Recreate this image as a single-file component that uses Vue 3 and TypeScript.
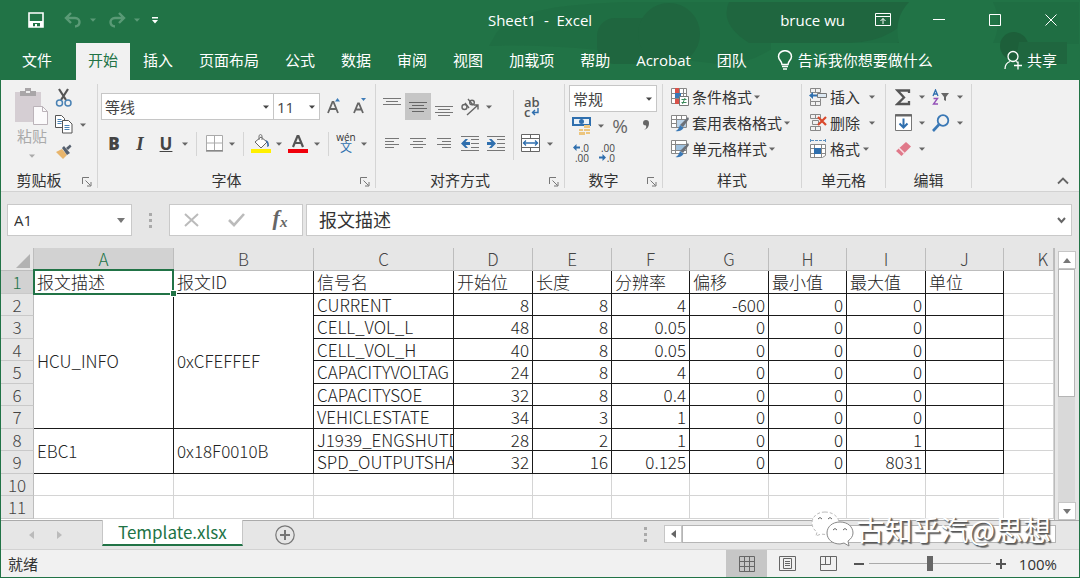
<script setup lang="ts">
import { h, ref } from 'vue'

const Caret = () =>
  h('svg', { class: 'caret', width: 6, height: 4, viewBox: '0 0 6 4', 'aria-hidden': 'true' }, [
    h('path', { d: 'M0 0.5h6L3 3.8z', fill: 'currentColor' }),
  ])

const Launcher = () =>
  h('svg', { class: 'launcher', width: 10, height: 10, viewBox: '0 0 10 10', 'aria-hidden': 'true' }, [
    h('path', { d: 'M.5 7V.5H7M3.5 3.5l5 5M9 5v4H5', fill: 'none', stroke: '#777' }),
  ])

const tabs: string[] = ['插入', '页面布局', '公式', '数据', '审阅', '视图', '加载项', '帮助', 'Acrobat', '团队']
const letters: string[] = ['A', 'B', 'C', 'D', 'E', 'F', 'G', 'H', 'I', 'J', 'K']
const headings: string[] = ['报文描述', '报文ID', '信号名', '开始位', '长度', '分辨率', '偏移', '最小值', '最大值', '单位']

interface Signal {
  message?: string
  id?: string
  span?: number
  name: string
  values: number[]
}

const signals: Signal[] = [
  { message: 'HCU_INFO', id: '0xCFEFFEF', span: 6, name: 'CURRENT', values: [8, 8, 4, -600, 0, 0] },
  { name: 'CELL_VOL_L', values: [48, 8, 0.05, 0, 0, 0] },
  { name: 'CELL_VOL_H', values: [40, 8, 0.05, 0, 0, 0] },
  { name: 'CAPACITYVOLTAG', values: [24, 8, 4, 0, 0, 0] },
  { name: 'CAPACITYSOE', values: [32, 8, 0.4, 0, 0, 0] },
  { name: 'VEHICLESTATE', values: [34, 3, 1, 0, 0, 0] },
  { message: 'EBC1', id: '0x18F0010B', span: 2, name: 'J1939_ENGSHUTD', values: [28, 2, 1, 0, 0, 1] },
  { name: 'SPD_OUTPUTSHA', values: [32, 16, 0.125, 0, 0, 8031] },
]

const cellRef = ref('A1')
const formula = ref('报文描述')
const zoom = ref(100)
</script>

<template>
  <div class="window">
    <header class="top">
      <svg class="pattern" width="600" height="66" viewBox="0 0 600 66" aria-hidden="true">
        <g fill="#1f663f">
          <path d="M18 32C40 8 90 4 150 2H600V44H300Q270 66 240 64L120 50Q60 44 10 46Z" opacity=".4" />
          <rect x="118" y="18" width="70" height="46" rx="18" />
          <circle cx="190" cy="34" r="31" />
          <path d="M250 2H440Q420 42 370 43H270Q240 24 250 2Z" />
          <rect x="414" y="42" width="50" height="22" rx="8" />
        </g>
        <path d="M430 2h84q10 20 0 41h-94q-6-24 10-41z" fill="#217346" />
        <rect x="292" y="43" width="240" height="23" fill="#217346" />
        <circle cx="535" cy="46" r="14" fill="#1d5f3a" />
        <path d="M540 42h48v22h-52z" fill="#1f663f" />
      </svg>
      <div class="titlebar">
        <div class="quick">
          <button class="q save" aria-label="保存">
            <svg width="16" height="16" viewBox="0 0 16 16"><path d="M1 1h14v14H1z" fill="none" stroke="#fff" stroke-width="1.6" /><path d="M1 9h14v6h-3v-4H5v4H1z" fill="#fff" /><path d="M7 12h2v3H7z" fill="#fff" /></svg>
          </button>
          <button class="q dim" aria-label="撤消">
            <svg width="18" height="16" viewBox="0 0 18 16" fill="none" stroke="currentColor" stroke-width="2.4"><path d="M7 1L2 6l5 5M2 6h9c6 0 6 8 0 8.500" /></svg>
            <Caret />
          </button>
          <button class="q dim" aria-label="恢复">
            <svg width="18" height="16" viewBox="0 0 18 16" fill="none" stroke="currentColor" stroke-width="2.4"><path d="M11 1l5 5-5 5M16 6H7c-6 0-6 8 0 8.500" /></svg>
            <Caret />
          </button>
          <button class="q" aria-label="自定义快速访问工具栏">
            <svg width="6" height="8" viewBox="0 0 6 8" fill="#fff"><path d="M0 1h6v1.400H0zM0 4h6L3 7.500z" /></svg>
          </button>
        </div>
        <div class="title">Sheet1&nbsp; -&nbsp; Excel</div>
        <div class="caption">
          <span class="user">bruce wu</span>
          <button aria-label="功能区显示选项"><svg width="16" height="14" viewBox="0 0 16 14" fill="none" stroke="#fff"><path d="M.5.5h15v12H.5zM.5 3.500h15M8 11V5.500M5.500 8L8 5.500 10.500 8" /></svg></button>
          <button aria-label="最小化"><svg width="12" height="12" viewBox="0 0 12 12" stroke="#fff"><path d="M0 5.500h12" /></svg></button>
          <button aria-label="最大化"><svg width="12" height="12" viewBox="0 0 12 12" fill="none" stroke="#fff"><path d="M.5.5h11v11H.5z" /></svg></button>
          <button aria-label="关闭"><svg width="12" height="12" viewBox="0 0 12 12" stroke="#fff"><path d="M.5.5l11 11M11.500.5l-11 11" /></svg></button>
        </div>
      </div>
      <nav class="tabs">
        <button class="file">文件</button>
        <button class="active">开始</button>
        <button v-for="t in tabs" :key="t">{{ t }}</button>
        <button class="tell">
          <svg width="16" height="20" viewBox="0 0 16 20" fill="none" stroke="#fff" stroke-width="1.500"><path d="M5 14.500C5 11 1.500 10 1.500 6.500a6.500 5.800 0 0 1 13 0C14.500 10 11 11 11 14.500zM5 16.500h6M6 19h4" /></svg>
          <span>告诉我你想要做什么</span>
        </button>
        <button class="share">
          <svg width="20" height="20" viewBox="0 0 20 20" fill="none" stroke="#fff" stroke-width="1.300"><circle cx="9" cy="6.500" r="5" /><path d="M1 19c0-4 2-6.500 5-7.500M12 11.500l2 1M10 15.500h8M14 11.500v8" /></svg>
          <span>共享</span>
        </button>
      </nav>
    </header>

    <section class="ribbon">
      <div class="group clipboard">
        <div class="body">
          <button class="paste">
            <svg width="34" height="38" viewBox="0 0 34 38"><path d="M0 4h26v30H0z" fill="#d5ced3" /><path d="M5 3h5V0h6v3h5v5H5z" fill="#a9a6a8" /><path d="M11 3h4v2h-4z" fill="#eee" /><path d="M18.500 18.500h9l5 5v13h-14z" fill="#fbfafb" stroke="#bbb3b9" /><path d="M27.500 18.500v5h5" fill="none" stroke="#bbb3b9" /></svg>
            <span>粘贴</span>
            <Caret />
          </button>
          <div class="stack clips">
            <button class="tool" aria-label="剪切">
              <svg width="18" height="20" viewBox="0 0 18 20" fill="none"><path d="M4 1l7 11M13 1L6 12" stroke="#555" stroke-width="2.200" /><circle cx="4.500" cy="15" r="3" stroke="#4a82b4" stroke-width="1.500" /><circle cx="13" cy="15" r="3" stroke="#4a82b4" stroke-width="1.500" /></svg>
            </button>
            <div class="line">
              <button class="tool" aria-label="复制">
                <svg width="18" height="19" viewBox="0 0 18 19" fill="#fff" stroke="#555"><path d="M.5.5h6l3 3v9h-9z" /><path d="M2.500 4.500h4M2.500 6.500h5M2.500 8.500h4" stroke="#4a82b4" /><path d="M7.500 5.500h6l3.500 3.500v9H7.500z" /><path d="M9.500 10.500h5M9.500 12.500h5M9.500 14.500h5" stroke="#4a82b4" /></svg>
              </button>
              <button class="drop" aria-label="复制选项"><Caret /></button>
            </div>
            <button class="tool" aria-label="格式刷">
              <svg width="18" height="16" viewBox="0 0 18 16"><path d="M1 8l6-3 5 6-4 4z" fill="#e8b56c" /><path d="M7 4l2-2 6 7-3 2z" fill="#56606e" /><path d="M11 4l4-3.500 1.500 2L13 6z" fill="#56606e" /></svg>
            </button>
          </div>
        </div>
        <footer><span>剪贴板</span><Launcher /></footer>
      </div>

      <div class="group font">
        <div class="body rows">
          <div class="line">
            <label class="combo wide"><select aria-label="字体"><option>等线</option></select><Caret /></label>
            <label class="combo size"><select aria-label="字号"><option>11</option></select><Caret /></label>
            <button class="tool grow" aria-label="增大字号"><svg width="14" height="18" viewBox="0 0 14 18"><path d="M1 15L5.500 4h1L11 15M3 11h6" fill="none" stroke="#666" stroke-width="1.800" /><path d="M8 3.500L10.500 0 13 3.500z" fill="#3e7cb8" /></svg></button>
            <button class="tool" aria-label="减小字号"><svg width="14" height="18" viewBox="0 0 14 18"><path d="M1 15L5 5.500h1L10 15M3 11.500h5" fill="none" stroke="#666" stroke-width="1.800" /><path d="M8 0h5l-2.500 3z" fill="#3e7cb8" /></svg></button>
          </div>
          <div class="line">
            <button class="tool glyph"><b>B</b></button>
            <button class="tool glyph serif"><i>I</i></button>
            <button class="tool glyph"><u>U</u></button>
            <button class="drop" aria-label="下划线选项"><Caret /></button>
            <span class="bar"></span>
            <button class="tool narrow" aria-label="边框"><svg width="17" height="17" viewBox="0 0 17 17" fill="#fff" stroke="#aaa"><path d="M.5.5h16v15H.5zM8.500.5v15M.5 8h16" /><path d="M0 16h17" stroke="#666" /></svg></button>
            <button class="drop" aria-label="边框选项"><Caret /></button>
            <span class="bar"></span>
            <button class="tool narrow" aria-label="填充颜色"><svg width="20" height="20" viewBox="0 0 20 20"><path d="M4 8l6-5 6 5-6 6z" fill="#fff" stroke="#666" /><path d="M8 6V1.500q1.500-2 3 0V6" fill="none" stroke="#777" /><path d="M14 6q4 0 4 6l-2 1q1-4-2-7z" fill="#3e6ea8" /><path d="M0 15h20v4H0z" fill="#fff000" /></svg></button>
            <button class="drop" aria-label="填充选项"><Caret /></button>
            <button class="tool" aria-label="字体颜色"><svg width="20" height="20" viewBox="0 0 20 20"><path d="M5 13L9.500 2h1L15 13M7 9h6" fill="none" stroke="#555" stroke-width="2.200" /><path d="M0 15h20v4H0z" fill="#f0000b" /></svg></button>
            <button class="drop" aria-label="颜色选项"><Caret /></button>
            <span class="bar"></span>
            <button class="tool narrow phonetic" aria-label="拼音指南"><small>wén</small><span>文</span></button>
            <button class="drop" aria-label="拼音选项"><Caret /></button>
          </div>
        </div>
        <footer><span>字体</span><Launcher /></footer>
      </div>

      <div class="group align">
        <div class="body">
          <div class="rows">
            <div class="line">
              <button class="tool" aria-label="顶端对齐"><svg width="18" height="20" viewBox="0 0 18 20" stroke="#777"><path d="M0 1.500h18M3 4.500h12M0 7.500h18" /></svg></button>
              <button class="tool on" aria-label="垂直居中"><svg width="18" height="20" viewBox="0 0 18 20" stroke="#666"><path d="M0 5.500h18M3 8.500h12M0 11.500h18M3 14.500h12" /></svg></button>
              <button class="tool" aria-label="底端对齐"><svg width="18" height="20" viewBox="0 0 18 20" stroke="#777"><path d="M0 9.500h18M3 12.500h12M0 15.500h18M3 18.500h12" /></svg></button>
              <button class="tool" aria-label="方向"><svg width="20" height="20" viewBox="0 0 20 20" fill="none" stroke="#666" stroke-width="1.400"><circle cx="4.500" cy="10" r="2.500" /><path d="M5 6l4 5M8 2l5 6" /><circle cx="12" cy="5.500" r="2.300" /><path d="M7 18L18 8M18 12.500V8h-4.500" /></svg></button>
              <button class="drop" aria-label="方向选项"><Caret /></button>
            </div>
            <div class="line">
              <button class="tool" aria-label="左对齐"><svg width="14" height="14" viewBox="0 0 14 14" stroke="#777"><path d="M0 1.500h14M0 4.500h9M0 7.500h14M0 10.500h9" /></svg></button>
              <button class="tool" aria-label="居中"><svg width="16" height="14" viewBox="0 0 16 14" stroke="#777"><path d="M0 1.500h16M3 4.500h10M0 7.500h16M3 10.500h10" /></svg></button>
              <button class="tool" aria-label="右对齐"><svg width="14" height="14" viewBox="0 0 14 14" stroke="#777"><path d="M0 1.500h14M5 4.500h9M0 7.500h14M5 10.500h9" /></svg></button>
              <button class="tool" aria-label="减少缩进"><svg width="18" height="18" viewBox="0 0 18 18"><path d="M0 1.500h18M10 4.500h8M10 8.500h8M10 12.500h8M0 15.500h18" stroke="#777" /><path d="M0 8.500L4.500 4H7L4.500 7H9v3H4.500L7 13H4.500z" fill="#2f6fae" /></svg></button>
              <button class="tool" aria-label="增加缩进"><svg width="18" height="18" viewBox="0 0 18 18"><path d="M0 1.500h18M10 4.500h8M10 8.500h8M10 12.500h8M0 15.500h18" stroke="#777" /><path d="M9 8.500L4.500 4H2l2.500 3H0v3h4.500L2 13h2.500z" fill="#2f6fae" /></svg></button>
            </div>
          </div>
          <span class="bar tall"></span>
          <div class="rows">
            <div class="line"><button class="tool wrap" aria-label="自动换行"><span>ab</span><span class="turn">c<svg width="8" height="8" viewBox="0 0 8 8" fill="none" stroke="#2f6fae" stroke-width="1.400"><path d="M7 0v4.500H1.500M4 2L1.500 4.500 4 7" /></svg></span></button></div>
            <div class="line">
              <button class="tool" aria-label="合并后居中"><svg width="20" height="19" viewBox="0 0 20 19" fill="#fff" stroke="#666"><path d="M.5.5h18v17H.5zM.5 4.500h18M.5 13.500h18M9.500.5v4M9.500 13.500v4" /><path d="M2 9h15M5 6.500L2.500 9 5 11.500M14 6.500L16.500 9 14 11.500" stroke="#2f6fae" fill="none" stroke-width="1.300" /></svg></button>
              <button class="drop" aria-label="合并选项"><Caret /></button>
            </div>
          </div>
        </div>
        <footer><span>对齐方式</span><Launcher /></footer>
      </div>

      <div class="group number">
        <div class="body stack">
          <label class="combo format"><select aria-label="数字格式"><option>常规</option></select><Caret /></label>
          <div class="line">
            <button class="tool" aria-label="会计数字格式"><svg width="20" height="20" viewBox="0 0 20 20"><path d="M0 1h19v9H0z" fill="#2f6fae" /><path d="M2 3h15v5H2z" fill="#e9f1f8" /><circle cx="9.500" cy="5.500" r="2.500" fill="#2f6fae" /><path d="M12 9h6v3h-6zM12 13h6v2h-6zM7 13h4v2H7zM7 16h6v3H7zM14 16h4v2h-4z" fill="#ecc57e" /></svg></button>
            <button class="drop" aria-label="会计选项"><Caret /></button>
            <button class="tool percent">%</button>
            <button class="tool comma" aria-label="千位分隔样式"><svg width="8" height="12" viewBox="0 0 8 12"><path d="M1 3a3 3 0 0 1 6 0c0 4-2 6-5 7q3-2 2-4.500Q1 5.500 1 3z" fill="#666" /></svg></button>
          </div>
          <div class="line">
            <button class="tool decimal" aria-label="增加小数位数"><span class="turn"><svg width="7" height="7" viewBox="0 0 7 7"><path d="M0 3.500L3.500 0v2.500H7v2H3.500V7z" fill="#2f6fae" /></svg>.0</span><span>.00</span></button>
            <button class="tool decimal" aria-label="减少小数位数"><span>.00</span><span class="turn"><svg width="7" height="7" viewBox="0 0 7 7"><path d="M7 3.500L3.500 0v2.500H0v2h3.500V7z" fill="#2f6fae" /></svg>.0</span></button>
          </div>
        </div>
        <footer><span>数字</span><Launcher /></footer>
      </div>

      <div class="group styles">
        <div class="body stack">
          <button class="command"><svg width="20" height="20" viewBox="0 0 20 20"><path d="M1.500 1.500h15v15h-15zM5.500 1.500v15M9.500 1.500v15M13.500 1.500v15M1.500 6.500h15M1.500 11.500h15" fill="#fff" stroke="#888" /><path d="M5 1h4v5H5zM5 12h4v5H5z" fill="#d8524a" /><path d="M5 6h6v5H5z" fill="#3a78b5" /><path d="M9.500 9.500h9v9h-9z" fill="#fff" stroke="#777" /><path d="M11.500 12.500h5M11.500 15.500h5M15 11l-2.500 6" stroke="#3b8a5a" /></svg><span>条件格式</span><Caret /></button>
          <button class="command"><svg width="20" height="20" viewBox="0 0 20 20"><path d="M1.500 2.500h15v12h-15zM6.500 2.500v12M11.500 2.500v12M1.500 6.500h15M1.500 10.500h15" fill="#fff" stroke="#888" /><path d="M7 7h9v7H7z" fill="#b9d2e8" /><path d="M18 4l1 2-6 8-3-2z" fill="#6b7078" /><path d="M10 12l3.500 3q-3 4-8 3 3-1 4.500-6z" fill="#3a78b5" /></svg><span>套用表格格式</span><Caret /></button>
          <button class="command"><svg width="20" height="20" viewBox="0 0 20 20"><path d="M1.500 1.500h15v13h-15zM5.500 1.500v13M1.500 5.500h15M1.500 11.500h15" fill="#fff" stroke="#888" /><path d="M6 6h9v5H6z" fill="#9fc1de" /><path d="M18 4l1 2-6 8-3-2z" fill="#6b7078" /><path d="M10 12l3.500 3q-3 4-8 3 3-1 4.500-6z" fill="#3a78b5" /></svg><span>单元格样式</span><Caret /></button>
        </div>
        <footer><span>样式</span></footer>
      </div>

      <div class="group cells">
        <div class="body stack">
          <button class="command spread"><svg width="18" height="20" viewBox="0 0 18 20"><path d="M1.500 1.500h10v4h-10zM6.500 1.500v4M1.500 14.500h10v4h-10zM6.500 14.500v4M1.500 11.500v3h10v-3" fill="none" stroke="#888" /><path d="M8.500 6.500h9v4h-9z" fill="#dce8f2" stroke="#777" /><path d="M0 8.500L4 5v2.500h4v2H4V12z" fill="#2f6fae" /></svg><span>插入</span><Caret /></button>
          <button class="command spread"><svg width="18" height="20" viewBox="0 0 18 20"><path d="M1.500 1.500h10v4h-10zM6.500 1.500v4M1.500 13.500h10v4h-10zM6.500 13.500v4M3.500 7.500h6v4h-6z" fill="none" stroke="#888" /><path d="M9 4l8 8M17 4l-8 8" stroke="#d9482b" stroke-width="2.200" /></svg><span>删除</span><Caret /></button>
          <button class="command"><svg width="18" height="20" viewBox="0 0 18 20"><path d="M1.500 5.500h15v11l-3 2h-12zM5.500 5.500v13M12.500 5.500v13M1.500 9.500h15M1.500 14.500h15" fill="#fff" stroke="#888" /><path d="M5 9h7v6H5z" fill="#2f6fae" /><path d="M2 1.500h14M1.500 0v3M16.500 0v3" stroke="#5b8fbe" stroke-dasharray="3 1" /></svg><span>格式</span><Caret /></button>
        </div>
        <footer><span>单元格</span></footer>
      </div>

      <div class="group editing">
        <div class="body stack">
          <div class="line">
            <button class="tool" aria-label="自动求和"><svg width="16" height="17" viewBox="0 0 16 17"><path d="M14 4V1.500H2.500L9 8.500l-6.500 6.500H14V12" fill="none" stroke="#555" stroke-width="2.300" /></svg></button>
            <button class="drop" aria-label="求和选项"><Caret /></button>
            <button class="tool" aria-label="排序和筛选"><svg width="18" height="16" viewBox="0 0 18 16" fill="none"><path d="M1 7l2.500-6L6 7M2 5h3" stroke="#2f6fae" stroke-width="1.300" /><path d="M1.500 9.500h4L1.500 15h4.500" stroke="#9452b8" stroke-width="1.400" /><path d="M9 4h8l-3 4v4l-2-1V8z" fill="#666" /></svg></button>
            <button class="drop" aria-label="排序选项"><Caret /></button>
          </div>
          <div class="line">
            <button class="tool" aria-label="填充"><svg width="17" height="18" viewBox="0 0 17 18"><path d="M.5.5h16v16H.5z" fill="#fff" stroke="#777" /><path d="M0 1.500h17" stroke="#666" stroke-width="2" /><path d="M8.500 4.500v9M4.500 9.500l4 4 4-4" fill="none" stroke="#2f6fae" stroke-width="2" /></svg></button>
            <button class="drop" aria-label="填充方向"><Caret /></button>
            <button class="tool" aria-label="查找和选择"><svg width="18" height="18" viewBox="0 0 18 18" fill="none" stroke="#3a78b5"><circle cx="11" cy="6.500" r="5.300" stroke-width="1.800" /><path d="M7 10.500L1 17" stroke-width="2.600" /></svg></button>
            <button class="drop" aria-label="查找选项"><Caret /></button>
          </div>
          <div class="line">
            <button class="tool" aria-label="清除"><svg width="17" height="16" viewBox="0 0 17 16"><path d="M1 10L11 1l5 4.500L6.500 15z" fill="#e0798a" /><path d="M4 7l5.500 5.500" stroke="#f7dfe3" stroke-width="1.500" /></svg></button>
            <button class="drop" aria-label="清除选项"><Caret /></button>
          </div>
        </div>
        <footer><span>编辑</span></footer>
      </div>
      <button class="collapse" aria-label="折叠功能区"><svg width="12" height="8" viewBox="0 0 12 8"><path d="M1 6.500l5-5 5 5" fill="none" stroke="#666" stroke-width="1.800" /></svg></button>
    </section>

    <section class="formula">
      <label class="namebox"><input v-model="cellRef" aria-label="名称框" /><svg width="8" height="5" viewBox="0 0 8 5"><path d="M0 0h8L4 5z" fill="#777" /></svg></label>
      <span class="grip"></span>
      <div class="fx">
        <button aria-label="取消"><svg width="16" height="14" viewBox="0 0 16 14"><path d="M1 1l13 12M14 1L1 13" stroke="#bbb" stroke-width="2" /></svg></button>
        <button aria-label="输入"><svg width="17" height="14" viewBox="0 0 17 14"><path d="M1 7l5 5L16 1" fill="none" stroke="#bbb" stroke-width="2.600" /></svg></button>
        <button class="fn"><i>f<sub>x</sub></i></button>
      </div>
      <label class="entry"><input v-model="formula" aria-label="编辑栏" /><svg width="9" height="7" viewBox="0 0 9 7"><path d="M1 1l3.500 4L8 1" fill="none" stroke="#666" stroke-width="2" /></svg></label>
    </section>

    <main class="sheet">
      <div class="canvas">
        <table>
          <colgroup>
            <col class="c-row" /><col v-for="n in 3" :key="'t' + n" class="c-text" />
            <col v-for="n in 7" :key="'n' + n" class="c-num" /><col />
          </colgroup>
          <thead>
            <tr>
              <th class="corner"><svg width="14" height="14" viewBox="0 0 14 14"><path d="M14 0v14H0z" fill="#b2b2b2" /></svg></th>
              <th v-for="l in letters" :key="l" :class="{ sel: l === 'A', last: l === 'K' }">{{ l }}</th>
            </tr>
          </thead>
          <tbody>
            <tr>
              <th class="sel">1</th>
              <td v-for="(t, i) in headings" :key="t" class="ink" :class="{ picked: i === 0 }">{{ t }}</td>
              <td></td>
            </tr>
            <tr v-for="(s, i) in signals" :key="s.name">
              <th>{{ i + 2 }}</th>
              <td v-if="s.span" class="ink" :rowspan="s.span">{{ s.message }}</td>
              <td v-if="s.span" class="ink" :rowspan="s.span">{{ s.id }}</td>
              <td class="ink name">{{ s.name }}</td>
              <td v-for="(v, k) in s.values" :key="k" class="ink num">{{ v }}</td>
              <td class="ink"></td>
              <td></td>
            </tr>
            <tr v-for="r in [10, 11]" :key="r">
              <th>{{ r }}</th>
              <td v-for="l in letters" :key="l"></td>
            </tr>
          </tbody>
        </table>
      </div>
      <div class="vscroll">
        <button aria-label="向上滚动"><svg width="8" height="5" viewBox="0 0 8 5"><path d="M0 5h8L4 0z" fill="#777" /></svg></button>
        <div class="track"><div class="thumb"></div></div>
        <button aria-label="向下滚动"><svg width="8" height="5" viewBox="0 0 8 5"><path d="M0 0h8L4 5z" fill="#777" /></svg></button>
      </div>
    </main>

    <section class="sheets">
      <div class="steps">
        <button aria-label="上一个工作表"><svg width="5" height="8" viewBox="0 0 5 8"><path d="M5 0v8L0 4z" fill="#bbb" /></svg></button>
        <button aria-label="下一个工作表"><svg width="5" height="8" viewBox="0 0 5 8"><path d="M0 0v8l5-4z" fill="#bbb" /></svg></button>
      </div>
      <button class="sheettab">Template.xlsx</button>
      <button class="add" aria-label="新工作表"><svg width="20" height="20" viewBox="0 0 20 20" fill="none" stroke="#777"><circle cx="10" cy="10" r="9.200" stroke-width="1.200" /><path d="M5 10h10M10 5v10" stroke-width="2" /></svg></button>
      <span class="grip"></span>
      <div class="hscroll">
        <button aria-label="向左滚动"><svg width="5" height="8" viewBox="0 0 5 8"><path d="M5 0v8L0 4z" fill="#666" /></svg></button>
        <div class="thumb"></div>
      </div>
      <div class="watermark">
        <svg width="44" height="38" viewBox="0 0 44 38" fill="#fff" stroke="#888"><path d="M15 2C7 2 2 7 2 13c0 4 2 7 5 9l-1 4 5-2c10 2 18-3 18-11 0-6-6-11-14-11z" stroke="#bbb" stroke-dasharray="3 2" /><path d="M30 12c-8 0-13 5-13 11s5 11 13 11l4-1 5 3-1-5c3-2 5-5 5-8 0-6-5-11-13-11z" /><path d="M8 9q2-3 4 0M18 9q2-3 4 0M23 20q2-3 4 0M33 20q2-3 4 0" fill="none" stroke="#666" /></svg>
        <span>古知乎汽@思想</span>
      </div>
    </section>

    <footer class="status">
      <span class="ready">就绪</span>
      <button class="view on" aria-label="普通"><svg width="16" height="16" viewBox="0 0 16 16" fill="none" stroke="#666"><path d="M.5.5h15v15H.5zM5.500.5v15M10.500.5v15M.5 5.500h15M.5 10.500h15" /></svg></button>
      <button class="view" aria-label="页面布局"><svg width="17" height="16" viewBox="0 0 17 16" fill="none" stroke="#666"><path d="M.5.5h16v14H.5zM4.500 2.500h8v10h-8zM6 5.500h5M6 7.500h5M6 9.500h5" /></svg></button>
      <button class="view" aria-label="分页预览"><svg width="17" height="16" viewBox="0 0 17 16" fill="none" stroke="#666"><path d="M.5.5h16v14H.5zM5.500.5v8M10.500.5v8M.5 8.500h10" /></svg></button>
      <button class="zoomer" aria-label="缩小"><svg width="10" height="10" viewBox="0 0 10 10"><path d="M0 5h10" stroke="#555" stroke-width="2" /></svg></button>
      <input v-model.number="zoom" class="slider" type="range" min="0" max="200" aria-label="显示比例" />
      <button class="zoomer" aria-label="放大"><svg width="10" height="10" viewBox="0 0 10 10"><path d="M0 5h10M5 0v10" stroke="#555" stroke-width="2" /></svg></button>
      <output class="percentage">{{ zoom }}%</output>
    </footer>
  </div>
</template>

<style>
body {
  margin: 0;
}
</style>

<style scoped>
.window {
  box-sizing: border-box;
  min-height: 100vh;
  display: flex;
  flex-direction: column;
  border: 1px solid #217346;
  border-top: 0;
  background: #e6e6e6;
  color: #333;
  font: 15px/20px 'Open Sans', 'Noto Sans CJK SC', sans-serif;
}
.window * {
  box-sizing: border-box;
}
button,
input,
select {
  margin: 0;
  padding: 0;
  border: 0;
  border-radius: 0;
  background: none;
  color: inherit;
  font: inherit;
  outline: 0;
}
svg {
  display: block;
  flex: none;
}
button {
  display: flex;
  align-items: center;
  justify-content: center;
}
.top {
  position: relative;
  background: #217346;
  color: #fff;
}
.pattern {
  position: absolute;
  top: 0;
  right: 0;
}
.titlebar {
  position: relative;
  height: 43px;
  padding-bottom: 3px;
  display: grid;
  grid-template-columns: 1fr auto 1fr;
  align-items: center;
}
.quick {
  display: flex;
  gap: 10px;
  padding-left: 27px;
}
.q {
  gap: 8px;
}
.q.save {
  margin-right: 10px;
}
.q.dim {
  color: #5a9a76;
  margin-right: 2px;
}
.caption {
  display: flex;
  justify-content: flex-end;
  align-items: center;
}
.user {
  margin-right: 10px;
}
.caption button {
  width: 56px;
  height: 40px;
}
.tabs {
  position: relative;
  display: flex;
  height: 37px;
  padding-bottom: 3px;
}
.tabs button {
  padding: 0 13px;
  white-space: nowrap;
}
.tabs .file {
  padding: 0 24px 0 21px;
}
.tabs .active {
  margin-bottom: -3px;
  padding: 0 12px 3px;
  background: #f1f1f1;
  color: #217346;
}
.tabs .tell {
  gap: 5px;
  padding-left: 17px;
}
.tabs .share {
  margin-left: auto;
  padding-right: 22px;
  gap: 3px;
}
.ribbon {
  display: flex;
  height: 112px;
  padding-top: 4px;
  background: #f1f1f1;
  border-bottom: 1px solid #d2d2d2;
}
.group {
  display: flex;
  flex-direction: column;
  justify-content: space-between;
  flex: none;
  height: 104px;
  border-right: 1px solid #d5d5d5;
}
.group footer {
  position: relative;
  height: 20px;
  margin-bottom: -2px;
  padding-right: 20px;
  text-align: center;
}
.styles footer,
.cells footer,
.editing footer {
  padding: 0;
}
.launcher {
  position: absolute;
  right: 5px;
  bottom: 3px;
}
.body {
  display: flex;
}
.stack {
  display: flex;
  flex-direction: column;
}
.rows {
  display: flex;
  flex-direction: column;
  gap: 10px;
  padding-top: 9px;
}
.line {
  display: flex;
  align-items: center;
  height: 27px;
}
.tool {
  width: 26px;
  height: 27px;
  flex: none;
}
.tool.narrow {
  width: 24px;
}
.tool.on {
  background: #c6c6c6;
}
.drop {
  width: 12px;
  height: 27px;
  color: #666;
  flex: none;
}
.bar {
  width: 1px;
  height: 24px;
  margin: 0 5px;
  background: #d5d5d5;
}
.bar.tall {
  height: 70px;
  margin: 6px 4px 0;
}
.clipboard {
  width: 97px;
}
.clipboard .body {
  padding-left: 14px;
}
.clips {
  padding-left: 2px;
}
.paste {
  flex-direction: column;
  justify-content: flex-start;
  padding-top: 4px;
  width: 34px;
  color: #aaa;
}
.paste .caret {
  margin-top: 8px;
}
.font {
  width: 278px;
}
.font .body {
  padding-left: 3px;
}
.combo {
  position: relative;
  display: block;
  height: 27px;
  background: #fff;
  border: 1px solid #c6c6c6;
  color: #444;
}
.combo select {
  width: 100%;
  height: 25px;
  padding-left: 3px;
  appearance: none;
}
.combo .caret {
  position: absolute;
  right: 4px;
  top: 11px;
}
.combo.wide {
  width: 173px;
}
.combo.size {
  width: 47px;
  margin-left: -1px;
}
.grow {
  margin-left: 1px;
}
.glyph {
  font-size: 17px;
  font-weight: 700;
  color: #444;
}
.serif {
  font-family: 'Liberation Serif', serif;
  font-size: 19px;
}
.phonetic {
  flex-direction: column;
}
.phonetic small {
  font-size: 10px;
  line-height: 9px;
}
.phonetic span {
  font-size: 12px;
  line-height: 12px;
  color: #2f6fae;
}
.align {
  width: 189px;
}
.align .body {
  padding-left: 3px;
}
.wrap {
  flex-direction: column;
  align-items: flex-start;
  padding-left: 6px;
  font-size: 13px;
  font-weight: 600;
  line-height: 10px;
  color: #555;
}
.turn {
  display: flex;
  align-items: center;
  gap: 1px;
}
.number {
  width: 98px;
}
.number .body {
  padding: 1px 5px 0 4px;
}
.percent {
  font-size: 19px;
  color: #666;
}
.decimal {
  flex-direction: column;
  align-items: flex-end;
  padding-right: 6px;
  font-size: 10px;
  line-height: 10px;
  color: #444;
}
.styles {
  width: 139px;
}
.styles .body,
.cells .body {
  padding-left: 7px;
}
.command {
  height: 27px;
  justify-content: flex-start;
  gap: 2px;
  white-space: nowrap;
}
.styles .command,
.cells .command,
.editing .line {
  height: 26px;
}
.command .caret {
  color: #666;
}
.cells {
  width: 84px;
}
.cells .command {
  gap: 3px;
}
.spread .caret {
  margin-left: 6px;
}
.editing {
  width: 86px;
}
.editing .body {
  padding-left: 4px;
}
.collapse {
  align-self: flex-end;
  margin: 0 10px 6px auto;
}
.formula {
  display: flex;
  align-items: center;
  height: 56px;
  padding: 0 7px 0 6px;
}
.namebox,
.fx,
.entry {
  display: flex;
  align-items: center;
  height: 32px;
  background: #fff;
  border: 1px solid #c9c9c9;
}
.namebox {
  width: 125px;
  padding: 0 6px;
}
.namebox input {
  flex: 1;
  min-width: 0;
}
.grip {
  width: 3px;
  height: 15px;
  margin: 0 17px;
  background: repeating-linear-gradient(#aaa 0 3px, transparent 3px 6px);
}
.fx {
  width: 134px;
}
.fx button {
  flex: 1;
}
.fn {
  font: 700 22px/26px 'Liberation Serif', serif;
  color: #666;
}
.fn sub {
  font-size: 15px;
  vertical-align: -2px;
}
.entry {
  flex: 1;
  margin-left: 3px;
  padding: 0 5px 0 12px;
}
.entry input {
  flex: 1;
  min-width: 0;
  font-size: 18px;
}
.sheet {
  display: flex;
  flex: 1;
}
.canvas {
  flex: 1;
  min-width: 0;
  background: #fff;
}
table {
  width: 100%;
  table-layout: fixed;
  border-collapse: separate;
  border-spacing: 0;
  font: 17px/20px 'Noto Sans CJK SC', sans-serif;
  font-weight: 300;
  color: #222;
}
.c-row {
  width: 33px;
}
.c-text {
  width: 140px;
}
.c-num {
  width: 79px;
}
.c-num:nth-child(2n + 7) {
  width: 78px;
}
th,
td {
  height: 23px;
  padding: 0 3px;
  white-space: nowrap;
  text-align: left;
  border-right: 1px solid #d4d4d4;
  border-bottom: 1px solid #d4d4d4;
}
tr:nth-child(even) th,
tr:nth-child(even) td {
  height: 22px;
}
th {
  padding: 0;
  font-weight: 300;
  text-align: center;
  background: #e6e6e6;
  border-color: #bdbdbd;
  color: #444;
}
tbody th {
  border-bottom-color: #c9c9c9;
}
th.sel {
  background: #d2d2d2;
  color: #217346;
}
th.last {
  padding-right: 5px;
  text-align: right;
}
.corner svg {
  margin: 3px 3px 0 auto;
}
td {
  line-height: 18px;
}
td.ink {
  border-color: #1a1a1a;
}
td.name {
  overflow: hidden;
}
td.num {
  text-align: right;
}
td.picked {
  position: relative;
}
td.picked::before {
  content: '';
  position: absolute;
  inset: -2px -1px -2px -1px;
  border: 2px solid #217346;
}
td.picked::after {
  content: '';
  position: absolute;
  right: -3px;
  bottom: -3px;
  width: 5px;
  height: 5px;
  background: #217346;
  outline: 1px solid #fff;
}
.vscroll {
  display: flex;
  flex-direction: column;
  width: 25px;
  padding: 3px 4px 0 3px;
  border-left: 1px solid #bbb;
}
.vscroll button,
.hscroll button {
  width: 18px;
  height: 18px;
  background: #fff;
  border: 1px solid #c6c6c6;
}
.track {
  flex: 1;
  background: #d9d9d9;
}
.vscroll .thumb {
  height: 55%;
  background: #fff;
  border: 1px solid #b5b5b5;
}
.sheets {
  position: relative;
  display: flex;
  align-items: flex-start;
  height: 29px;
  border-top: 1px solid #ababab;
}
.steps {
  display: flex;
  width: 101px;
  height: 28px;
  padding-left: 28px;
  gap: 23px;
}
.sheettab {
  height: 26px;
  margin-top: -1px;
  padding: 0 15px;
  background: #fff;
  border: 1px solid #c6c6c6;
  border-top: 0;
  border-bottom: 2px solid #217346;
  color: #217346;
  font: 17px/20px 'Noto Sans CJK SC', sans-serif;
}
.add {
  margin: 4px auto 0 32px;
}
.sheets .grip {
  height: 15px;
  margin-top: 6px;
}
.hscroll {
  display: flex;
  width: 392px;
  margin: 4px 23px 0 0;
}
.hscroll .thumb {
  flex: 1;
  height: 18px;
  background: #fff;
  border: 1px solid #b5b5b5;
}
.watermark {
  position: absolute;
  right: 28px;
  top: -12px;
  display: flex;
  align-items: center;
  gap: 3px;
  color: #fff;
  font: 28px/40px 'Noto Sans CJK SC', sans-serif;
  text-shadow: 1px 1px 1px #555, 2px 2px 1px #777;
  white-space: nowrap;
}
.status {
  display: flex;
  align-items: center;
  height: 28px;
  padding: 0 22px 0 7px;
  background: #f1f1f1;
  border-top: 1px solid #d2d2d2;
}
.ready {
  margin-right: auto;
}
.view {
  width: 41px;
  height: 27px;
}
.view.on {
  background: #c6c6c6;
}
.zoomer {
  width: 20px;
  height: 27px;
}
.slider {
  appearance: none;
  width: 122px;
  height: 18px;
  background: linear-gradient(#aaa, #aaa) center / 100% 1px no-repeat;
}
.slider::-webkit-slider-thumb {
  appearance: none;
  width: 6px;
  height: 15px;
  background: #666;
}
.percentage {
  width: 46px;
  text-align: right;
}
</style>
